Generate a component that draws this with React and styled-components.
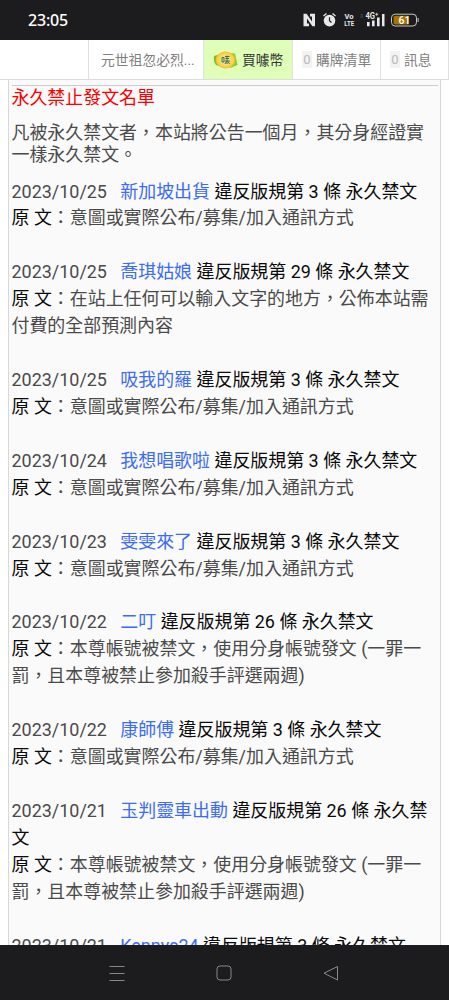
import styled, { createGlobalStyle } from "styled-components"


const GlobalStyle = createGlobalStyle`
    * {
        box-sizing: border-box;
    }

    body {
        margin: 0;
        background: #fff;
        font-family: Roboto, "Noto Sans CJK TC", sans-serif;
    }
`

const Screen = styled.div`
    display: flex;
    flex-direction: column;
    width: 449px;
    height: 1000px;
    overflow: hidden;
`

const StatusBar = styled.header`
    display: flex;
    flex: none;
    align-items: center;
    justify-content: space-between;
    height: 40px;
    padding: 0 28px;
    background: #1c1c1e;
    color: #fff;
`

const Clock = styled.span`
    font-family: "Noto Sans", sans-serif;
    font-size: 16px;
    font-weight: 500;
    letter-spacing: -0.2px;
    line-height: 20px;
`

const StatusIcons = styled.svg`
    display: block;
    width: 118px;
    height: 20px;
    margin-right: 1px;
    font-family: Roboto, sans-serif;
    font-weight: 700;
`

const TabBar = styled.nav`
    display: flex;
    flex: none;
    height: 40px;
    padding-left: 88px;
    border-bottom: 1px solid #dcdcdc;
    background: #fff;
`

const Tab = styled.a`
    display: flex;
    flex: none;
    align-items: center;
    width: ${p => p.$width}px;
    padding-left: ${p => p.$pad}px;
    border-left: 1px solid #e0e0e0;
    background: ${p => p.$active ? '#dfffb9' : '#fff'};
    color: ${p => p.$active ? '#333' : '#808080'};
    font-size: 13.8px;
    line-height: 20px;
    white-space: nowrap;
`

const Count = styled.span`
    width: 10px;
    margin-right: 4px;
    background: #f2f2f2;
    color: #bbb;
    font-size: 13px;
    line-height: 17px;
    text-align: center;
`

const CoinIcon = styled.svg`
    width: 25px;
    height: 20px;
    margin-right: 4px;
`

const Page = styled.main`
    flex: 1;
    min-height: 0;
    padding: 0 8px;
    overflow: hidden;
`

const Board = styled.section`
    height: 100%;
    padding: 5px 2px 0 2.5px;
    border: solid #d8d8d8;
    border-width: 0 1px;
    background: #fafafa;
    color: #4a4a4a;
    font-size: 17.95px;
`

const Title = styled.h1`
    margin: 0;
    padding-top: 1px;
    border-top: 1px solid #ccc;
    color: #f00;
    font-size: 17.95px;
    font-weight: 400;
    line-height: 22px;
`

const Notice = styled.p`
    margin: 13px 0 13.5px;
    line-height: 21.5px;
`

const Entry = styled.article`
    margin-bottom: 26.93px;
    line-height: 26.93px;
`

const Line = styled.div`
    white-space: pre-wrap;
`

const User = styled.a`
    color: #3a6cf5;
`

const Dark = styled.span`
    color: #0a0a0a;
`

const NavBar = styled.footer`
    display: flex;
    flex: none;
    align-items: center;
    justify-content: center;
    gap: 91px;
    height: 55px;
    padding-right: 2px;
    background: #1c1c1e;
`

const NavIcon = styled.svg`
    width: 16px;
    height: 16px;
    fill: none;
    stroke: #88888a;
    stroke-width: 1;
`


const contact = '意圖或實際公布/募集/加入通訊方式'
const alias = '本尊帳號被禁文，使用分身帳號發文 (一罪一罰，且本尊被禁止參加殺手評選兩週)'

const bans = [
    {date: '2023/10/25', user: '新加坡出貨', rule: 3, reason: contact},
    {date: '2023/10/25', user: '喬琪姑娘', rule: 29, reason: '在站上任何可以輸入文字的地方，公佈本站需付費的全部預測內容'},
    {date: '2023/10/25', user: '吸我的羅', rule: 3, reason: contact},
    {date: '2023/10/24', user: '我想唱歌啦', rule: 3, reason: contact},
    {date: '2023/10/23', user: '雯雯來了', rule: 3, reason: contact},
    {date: '2023/10/22', user: '二叮', rule: 26, reason: alias},
    {date: '2023/10/22', user: '康師傅', rule: 3, reason: contact},
    {date: '2023/10/21', user: '玉判靈車出動', rule: 26, reason: alias},
    {date: '2023/10/21', user: 'Kennys24', rule: 3, reason: contact},
]


const PhoneStatus = () => {
    return <StatusIcons viewBox='0 0 118 20' fill='#e8e8ea'>
        {/* nfc */}
        <path d='M1.5 3.8H4.6L10 11.5V6.4H8V3.8H13V16.2H10.4L5 8.5V13.6H7V16.2H1.5Z' />
        {/* alarm */}
        <circle cx='27.5' cy='10.6' r='5.8' />
        <path d='M21.5 6L24.5 3.5M33.5 6L30.5 3.5' stroke='#e8e8ea' strokeWidth='1.3' />
        <path d='M27.5 7.3V10.8L29.5 12.5' fill='none' stroke='#1c1c1e' strokeWidth='1.2' />
        <text x='42.5' y='9' fontSize='7.6' textLength='9' lengthAdjust='spacingAndGlyphs'>Vo</text>
        <text x='42.3' y='16.3' fontSize='8' textLength='9.8' lengthAdjust='spacingAndGlyphs'>LTE</text>
        {/* signal */}
        <path d='M58.5 4.8h2.5M58.5 7h2.5' stroke='#555' />
        <text x='63.5' y='9' fontSize='8.6' textLength='9.5' lengthAdjust='spacingAndGlyphs'>4G</text>
        <path d='M73.2 4.3h3M74.7 2.8v3' stroke='#e8e8ea' strokeWidth='.8' />
        <path d='M65 12H67.6V16.2H65ZM70 10.5H72.6V16.2H70ZM75 7.5H77.6V16.2H75ZM80 4H82.5V16.2H80Z' />
        {/* battery */}
        <rect x='89.5' y='4.2' width='25' height='11.8' rx='3.6' fill='none' stroke='#c8c8ca' />
        <path d='M93.5 5.8H106.5V14.4H93.5Q91.5 14.4 91.5 12.5V7.5Q91.5 5.8 93.5 5.8Z' fill='#a87400' />
        <path d='M116.1 8V12' stroke='#c8c8ca' />
        <text x='96.5' y='13.8' fontSize='10.5' fontWeight='500' fill='#fff'>61</text>
    </StatusIcons>
}


const Coin = () => {
    return <CoinIcon viewBox='0 0 25 20'>
        <path d='M1 6L6 4.5V16L3 15Q0 11 1 6Z' fill='#82bd24' />
        <path d='M17 3L22 3.5L24.5 15L17 18Z' fill='#91c82b' />
        <ellipse cx='12.5' cy='10' rx='9.3' ry='8' fill='#ffd23d' stroke='#f3be3a' />
        <ellipse cx='12.5' cy='10' rx='6.2' ry='5.8' fill='#e3e28a' />
        <path d='M9 7.5H11V12H9ZM12 6.5H16.5M12.5 8.5H16M14 5.5V14M12 11H17M12 14L13.5 11.5M16.5 14L15 11.5' fill='none' stroke='#3f6340' strokeWidth='.9' />
    </CoinIcon>
}


const BanEntry = ({date, user, rule, reason}) => {
    return <Entry>
        <Line>{date}{'\u00a0\u00a0 '}<User>{user}</User><Dark> 違反版規第 {rule} 條 永久禁文</Dark></Line>
        <Line><Dark>原 文</Dark>：{reason}</Line>
    </Entry>
}


const App = () => {
    return <Screen>
        <GlobalStyle />
        <StatusBar>
            <Clock>23:05</Clock>
            <PhoneStatus />
        </StatusBar>

        <TabBar>
            <Tab $width={115} $pad={12}>元世祖忽必烈...</Tab>
            <Tab $width={89} $pad={9} $active><Coin />買噱幣</Tab>
            <Tab $width={88} $pad={9}><Count>0</Count>購牌清單</Tab>
            <Tab $width={68} $pad={9}><Count>0</Count>訊息</Tab>
            <Tab $width={1} $pad={0} />
        </TabBar>

        <Page>
            <Board>
                <Title>永久禁止發文名單</Title>
                <Notice>凡被永久禁文者，本站將公告一個月，其分身經證實一樣永久禁文。</Notice>
                {
                    bans.map((b, i) => <BanEntry key={i} {...b} />)
                }
            </Board>
        </Page>

        <NavBar>
            <NavIcon viewBox='0 0 16 16'><path d='M.5 1.5h15M.5 8.5h15M.5 15.5h15' /></NavIcon>
            <NavIcon viewBox='0 0 16 16'><rect x='1' y='1' width='14' height='14' rx='3' /></NavIcon>
            <NavIcon viewBox='0 0 16 16'><path d='M14.5 1.5V15L1 8.2Z' strokeLinejoin='round' /></NavIcon>
        </NavBar>
    </Screen>
}


export default App
